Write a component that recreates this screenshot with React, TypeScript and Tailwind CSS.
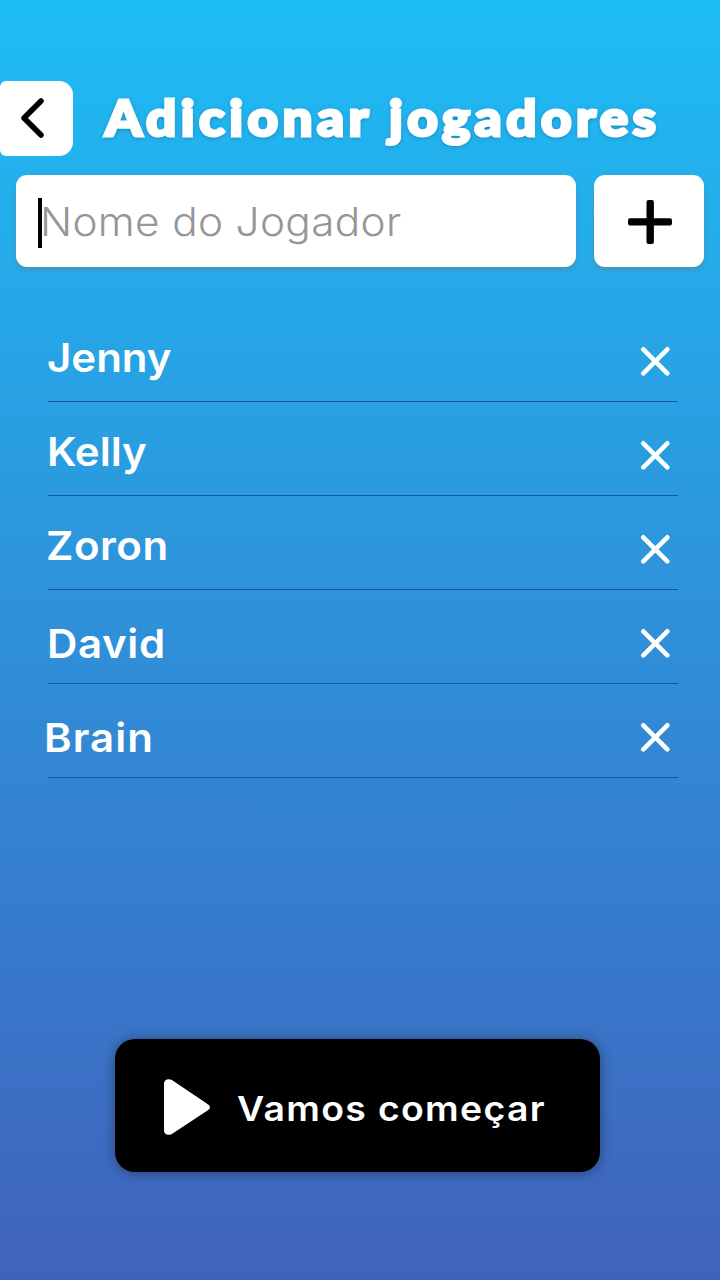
import React, { useState } from 'react';

interface Player {
  id: number;
  name: string;
  className: string;
}

const INITIAL_PLAYERS: Player[] = [
  { id: 1, name: 'Jenny', className: '-ml-px tracking-[0px]' },
  { id: 2, name: 'Kelly', className: '-ml-px tracking-[0px]' },
  { id: 3, name: 'Zoron', className: '-ml-[2px] tracking-[0.5px]' },
  { id: 4, name: 'David', className: '-ml-px pt-1 tracking-[0.6px]' },
  { id: 5, name: 'Brain', className: '-ml-1 pt-1 tracking-[1px]' },
];

const BackIcon = () => (
  <svg width="26" height="42" viewBox="0 0 26 42" fill="none" stroke="#000" strokeWidth="5.5" strokeLinecap="round" strokeLinejoin="round">
    <path d="M21 3L4 20l17 17" />
  </svg>
);

const PlusIcon = () => (
  <svg width="44" height="44" viewBox="0 0 44 44" fill="#000">
    <rect x="18.5" y="0" width="7.4" height="44" rx="2" />
    <rect x="0" y="18.2" width="44" height="7.4" rx="2" />
  </svg>
);

const RemoveIcon = () => (
  <svg width="30" height="30" viewBox="0 0 30 30" fill="none" stroke="#fff" strokeWidth="4.6" strokeLinecap="round">
    <path d="M3.3 3.3l24 24M27.3 3.3l-24 24" />
  </svg>
);

const PlayIcon = () => (
  <svg width="46" height="56" viewBox="0 0 46 56" fill="#fff">
    <path d="M0 4.5C0 1 3.5-1 7.5.8L43.5 25Q48.5 28 43.5 31.5L7.5 55.2C3.5 57 0 55 0 51.5Z" />
  </svg>
);

const App: React.FC = () => {
  const [players, setPlayers] = useState<Player[]>(INITIAL_PLAYERS);
  const [name, setName] = useState('');

  const addPlayer = () => {
    if (!name.trim()) return;
    setPlayers(prev => [...prev, { id: Date.now(), name: name.trim(), className: '-ml-px tracking-[0px]' }]);
    setName('');
  };

  const removePlayer = (id: number) => {
    setPlayers(prev => prev.filter(p => p.id !== id));
  };

  return (
    <div className="flex h-[1280px] w-[720px] flex-col overflow-hidden bg-linear-to-b/srgb from-[#1ebdf5] to-[#4062bc] font-['Inter',sans-serif]">
      {/* Header */}
      <header className="mt-[81px] flex h-[75px] shrink-0 items-center">
        <button className="flex h-[75px] w-[73px] items-center rounded-l-md rounded-r-[14px] bg-white pl-[20px]">
          <BackIcon />
        </button>
        <h1 className="-mt-[3px] ml-[32px] origin-left scale-x-[1.06] whitespace-nowrap font-['Lato',sans-serif] text-[50px] leading-[75px] font-black tracking-[4.2px] text-white [-webkit-text-stroke:3px_white] [stroke-linejoin:round] [text-shadow:0_1px_5px_rgba(0,40,80,0.55)]">
          Adicionar jogadores
        </h1>
      </header>

      {/* Name input */}
      <div className="mt-[19px] flex h-[92px] shrink-0 gap-[18px] px-4">
        <label className="flex w-[560px] items-center rounded-[11px] bg-white pl-[22px] shadow-[0_3px_4px_rgba(110,120,130,0.45)]">
          <span className="mt-[4px] h-[50px] w-1 shrink-0 bg-black" />
          <input
            value={name}
            onChange={e => setName(e.target.value)}
            placeholder="Nome do Jogador"
            className="-ml-[2px] h-full w-[480px] origin-left scale-x-[1.085] bg-transparent text-[39px] font-light tracking-[0.3px] text-black caret-transparent outline-none placeholder:text-[#969696]"
          />
        </label>
        <button onClick={addPlayer} className="flex w-[110px] items-center justify-center rounded-[11px] bg-white pt-[2px] pl-[2px] shadow-[0_3px_4px_rgba(110,120,130,0.45)]">
          <PlusIcon />
        </button>
      </div>

      {/* Player list */}
      <ul className="mt-[41px] mr-[42px] ml-12 grow">
        {players.map(player => (
          <li key={player.id} className="flex h-[94px] items-start justify-between border-b border-[#125a9f]">
            <span className={`mt-[25px] origin-left scale-x-[1.05] text-[40px] leading-[50px] font-semibold text-white ${player.className}`}>
              {player.name}
            </span>
            <button onClick={() => removePlayer(player.id)} className="mt-[38px] mr-[8px]">
              <RemoveIcon />
            </button>
          </li>
        ))}
      </ul>

      {/* Start */}
      <button className="mb-[108px] ml-[115px] flex h-[133px] w-[485px] shrink-0 items-center rounded-[20px] bg-black pt-[3px] pl-[49px] text-white shadow-[0_1px_12px_rgba(30,40,60,0.6)]">
        <PlayIcon />
        <span className="mt-[2px] ml-[27px] origin-left scale-x-[1.1] whitespace-nowrap text-[34px] font-semibold tracking-[1.2px]">Vamos começar</span>
      </button>
    </div>
  );
};

export default App;
